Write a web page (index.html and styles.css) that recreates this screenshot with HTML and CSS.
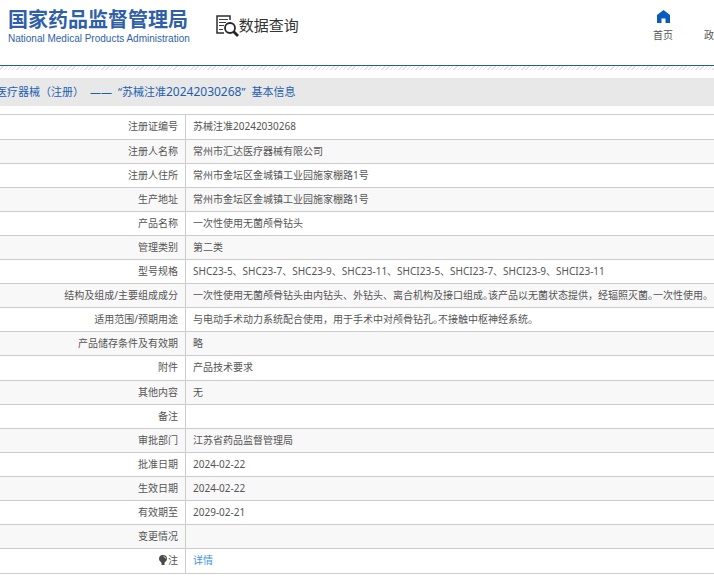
FILE: index.html
```html
<!DOCTYPE html>
<html lang="zh-CN">
<head>
<meta charset="utf-8">
<title>国家药品监督管理局 数据查询</title>
<link rel="stylesheet" href="styles.css">
</head>
<body>
<header class="header">
  <div class="brand">
    <div class="brand-cn">国家药品监督管理局</div>
    <div class="brand-en">National Medical Products Administration</div>
  </div>
  <div class="section">
    <svg class="section-icon" viewBox="0 0 23 23" aria-hidden="true">
      <path d="M14 6V2H1v17h7" fill="none" stroke="#2d2d35" stroke-width="1.5"/>
      <path d="M3 5.500h9M3 8.500h7M3 11.500h5M3 15.500h4" stroke="#3c3c44" stroke-width="1.200"/>
      <circle cx="14" cy="14" r="5" fill="#fff" stroke="#25252d" stroke-width="1.800"/>
      <path d="M17.500 17.500l4.500 4.500" stroke="#25252d" stroke-width="2.800"/>
    </svg>
    <span>数据查询</span>
  </div>
  <nav class="nav">
    <a class="nav-item" href="#home">
      <svg class="nav-icon" viewBox="0 0 13 13" aria-hidden="true"><path d="M6.500 0L13 5v8H8.500V8.500h-4V13H0V5z" fill="#0a5cbc"/></svg>
      <span>首页</span>
    </a>
    <a class="nav-item" href="#policy"><span>政</span></a>
  </nav>
</header>
<div class="hatch"></div>
<main>
  <h1 class="title"><span>医疗器械（注册）</span><span>——</span><span>“苏械注准<span class="title-number">20242030268</span>”</span><span>基本信息</span></h1>
  <table class="info">
    <colgroup><col class="label-col"><col></colgroup>
    <tbody>
      <tr><th scope="row">注册证编号</th><td>苏械注准20242030268</td></tr>
      <tr><th scope="row">注册人名称</th><td>常州市汇达医疗器械有限公司</td></tr>
      <tr><th scope="row">注册人住所</th><td>常州市金坛区金城镇工业园施家棚路1号</td></tr>
      <tr><th scope="row">生产地址</th><td>常州市金坛区金城镇工业园施家棚路1号</td></tr>
      <tr><th scope="row">产品名称</th><td>一次性使用无菌颅骨钻头</td></tr>
      <tr><th scope="row">管理类别</th><td>第二类</td></tr>
      <tr><th scope="row">型号规格</th><td>SHC23-5、SHC23-7、SHC23-9、SHC23-11、SHCI23-5、SHCI23-7、SHCI23-9、SHCI23-11</td></tr>
      <tr><th scope="row">结构及组成/主要组成成分</th><td>一次性使用无菌颅骨钻头由内钻头、外钻头、离合机构及接口组成<span class="stop">。</span>该产品以无菌状态提供，经辐照灭菌<span class="stop">。</span>一次性使用<span class="stop">。</span></td></tr>
      <tr><th scope="row">适用范围/预期用途</th><td>与电动手术动力系统配合使用，用于手术中对颅骨钻孔<span class="stop">。</span>不接触中枢神经系统<span class="stop">。</span></td></tr>
      <tr><th scope="row">产品储存条件及有效期</th><td>略</td></tr>
    </tbody>
    <tbody>
      <tr><th scope="row">附件</th><td>产品技术要求</td></tr>
      <tr><th scope="row">其他内容</th><td>无</td></tr>
      <tr><th scope="row">备注</th><td></td></tr>
      <tr><th scope="row">审批部门</th><td>江苏省药品监督管理局</td></tr>
      <tr><th scope="row">批准日期</th><td>2024-02-22</td></tr>
      <tr><th scope="row">生效日期</th><td>2024-02-22</td></tr>
      <tr><th scope="row">有效期至</th><td>2029-02-21</td></tr>
      <tr><th scope="row">变更情况</th><td></td></tr>
    </tbody>
    <tbody>
      <tr><th scope="row"><svg class="note-icon" viewBox="0 0 8 10" aria-hidden="true"><path d="M4 0a4 4 0 0 0-4 4c0 2 2 2.500 2.500 4v2h3V8C6 6.500 8 6 8 4a4 4 0 0 0-4-4z" fill="#4a4a4a"/><path d="M4.500 1.500a2.200 2.200 0 0 1 2 2" fill="none" stroke="#ddd"/></svg>注</th><td><a class="detail" href="#detail">详情</a></td></tr>
    </tbody>
  </table>
</main>
</body>
</html>
```
FILE: styles.css
```css
* { box-sizing: border-box; }

body {
  margin: 0;
  overflow-x: hidden;
  background: #fff;
  color: #555;
  font: 10px/14px "Noto Sans", "Noto Sans CJK SC", sans-serif;
}

a { color: inherit; text-decoration: none; }

.header {
  display: flex;
  align-items: flex-start;
  height: 66px;
  padding-left: 8px;
  border-bottom: 1px solid #235f92;
}

.brand { padding-top: 8px; color: #2f5fa9; white-space: nowrap; }
.brand-cn { font-size: 20px; line-height: 24px; font-weight: 700; }
.brand-en { font: 10px/14px "Liberation Sans", Arial, sans-serif; }

.section {
  display: flex;
  align-items: center;
  margin-left: 26px;
  padding-top: 13px;
  color: #333;
  font-size: 15px;
  line-height: 24px;
  white-space: nowrap;
}
.section-icon { width: 23px; height: 23px; }

.nav {
  display: flex;
  align-items: flex-end;
  gap: 31px;
  margin-left: auto;
  padding-top: 10px;
}
.nav-item {
  display: flex;
  flex-direction: column;
  align-items: center;
  gap: 5px;
}
.nav-icon { width: 13px; height: 13px; }

.hatch {
  height: 4px;
  background: repeating-linear-gradient(135deg, #fff 0 2px, #e2e2e2 2px 3px);
}

.title {
  display: flex;
  gap: 6px;
  margin: 8px 0;
  margin-left: -4px;
  background: #e8e8e8;
  color: #1f5fae;
  font-size: 11px;
  font-weight: 400;
  line-height: 28px;
  white-space: nowrap;
}
.title-number { font-size: 12px; }

.info {
  width: 100%;
  table-layout: fixed;
  border-spacing: 0;
  border-top: 1px solid #ccc;
}
.label-col { width: 186px; }
.info th,
.info td {
  height: 24px;
  padding: 0 7px 2px;
  border-bottom: 1px solid #ccc;
  font-weight: 400;
  text-align: left;
  white-space: nowrap;
}
.info th {
  border-right: 1px solid #ccc;
  text-align: right;
}
.info tr:first-child > * { height: 25px; }
.info tr:nth-child(even) { background: #f8f8f8; }

/* half-width full stops */
.stop { font-feature-settings: "halt"; }

.note-icon { width: 8px; height: 10px; margin-right: 1px; vertical-align: -1px; }
.detail { color: #3c90ea; }
```
